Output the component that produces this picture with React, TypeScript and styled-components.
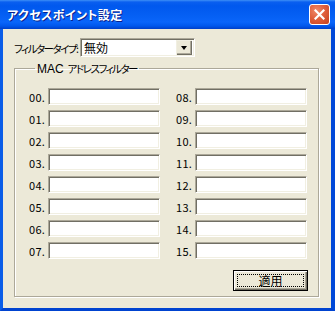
import React from 'react';
import styled, { createGlobalStyle } from 'styled-components';

const GlobalStyle = createGlobalStyle`
  html, body {
    margin: 0;
    padding: 0;
    background: #ffffff;
  }
  body {
    font-family: "Noto Sans CJK JP", "Liberation Sans", sans-serif;
    font-size: 12px;
    color: #000000;
  }
`;

const Window = styled.div`
  width: 335px;
  height: 311px;
  display: flex;
  flex-direction: column;
  background: #0055e5;
`;

const TitleBar = styled.div`
  height: 29px;
  flex: none;
  display: flex;
  align-items: center;
  justify-content: space-between;
  box-sizing: border-box;
  padding: 0 5px 0 7px;
  background: linear-gradient(
    to bottom,
    #3d8ff6 0px,
    #0a5ff0 2px,
    #0058ee 6px,
    #0560f4 16px,
    #0a65fa 22px,
    #0057ec 26px,
    #003fc8 29px
  );
`;

const Title = styled.span`
  color: #ffffff;
  font-weight: bold;
  font-size: 12px;
  font-feature-settings: 'palt';
  letter-spacing: 0.4px;
  text-shadow: 1px 1px 0 #0a1f8a;
`;

const CloseButton = styled.div`
  width: 21px;
  height: 21px;
  box-sizing: border-box;
  border: 1px solid #ffffff;
  border-radius: 3px;
  background: radial-gradient(circle at 35% 30%, #ef8a6a 0%, #e0603d 45%, #c4401d 100%);
  display: flex;
  align-items: center;
  justify-content: center;
`;

const Frame = styled.div`
  flex: 1;
  display: flex;
  border-left: 3px solid #0a5de8;
  border-right: 4px solid #0048d8;
  border-bottom: 3px solid #0043d0;
`;

const Client = styled.div`
  flex: 1;
  background: #ece9d8;
  display: flex;
  flex-direction: column;
  padding: 9px 0 0 11px;
`;

const FilterRow = styled.div`
  display: flex;
  align-items: center;
`;

// narrow katakana run, to get close to the proportional UI font widths
const Kana = styled.span`
  font-size: 10.5px;
  font-feature-settings: 'palt';
  letter-spacing: -1.5px;
`;

const FilterLabel = styled.span`
  width: 66px;
  flex: none;
  white-space: nowrap;
`;

const Combo = styled.div`
  width: 115px;
  height: 19px;
  box-sizing: border-box;
  background: #ffffff;
  border-top: 1px solid #aca899;
  border-left: 1px solid #aca899;
  border-bottom: 1px solid #ffffff;
  border-right: 1px solid #ffffff;
  box-shadow: inset 1px 1px 0 #716f64, inset -1px -1px 0 #f1efe2;
  display: flex;
  align-items: center;
  padding: 2px;
`;

const ComboValue = styled.span`
  flex: 1;
  padding-left: 1px;
  line-height: 15px;
`;

const ComboButton = styled.span`
  width: 16px;
  height: 15px;
  box-sizing: border-box;
  background: #ece9d8;
  box-shadow: inset 1px 1px 0 #f1efe2, inset -1px -1px 0 #716f64, inset -2px -2px 0 #aca899;
  display: flex;
  align-items: center;
  justify-content: center;
`;

const Arrow = styled.span`
  width: 0;
  height: 0;
  border-left: 3.5px solid transparent;
  border-right: 3.5px solid transparent;
  border-top: 4px solid #000000;
  margin-top: 1px;
`;

const Group = styled.fieldset`
  width: 305px;
  box-sizing: border-box;
  margin: 4px 0 0 0;
  padding: 12px 10px 5px 14px;
  border: 1px solid #aca899;
  box-shadow: 1px 1px 0 #ffffff, inset 1px 1px 0 #ffffff;
  display: flex;
  flex-direction: column;
`;

const Legend = styled.legend`
  margin-left: 6px;
  padding: 0 2px;
  line-height: 14px;
  white-space: nowrap;
`;

const Latin = styled.span`
  font-family: "Liberation Sans", sans-serif;
  font-size: 12px;
  margin-right: 4px;
`;

const Columns = styled.div`
  display: flex;
  gap: 16px;
`;

const Column = styled.div`
  display: flex;
  flex-direction: column;
  gap: 5px;
`;

const Row = styled.div`
  display: flex;
  align-items: center;
`;

const Num = styled.span`
  width: 19px;
  font-size: 11px;
  letter-spacing: 0.3px;
`;

const Field = styled.input`
  width: 112px;
  height: 17px;
  box-sizing: border-box;
  margin: 0;
  padding: 0 2px;
  background: #ffffff;
  border-top: 1px solid #aca899;
  border-left: 1px solid #aca899;
  border-bottom: 1px solid #ffffff;
  border-right: 1px solid #ffffff;
  box-shadow: inset 1px 1px 0 #716f64, inset -1px -1px 0 #f1efe2;
  outline: none;
  font: inherit;
`;

const Footer = styled.div`
  display: flex;
  justify-content: flex-end;
  margin-top: 11px;
`;

const Button = styled.button`
  width: 75px;
  height: 21px;
  box-sizing: border-box;
  margin: 0;
  padding: 3px;
  border: 1px solid #000000;
  background: #ece9d8;
  box-shadow: inset 1px 1px 0 #ffffff, inset -1px -1px 0 #716f64, inset -2px -2px 0 #aca899;
  font: inherit;
  display: flex;
`;

const FocusRect = styled.span`
  flex: 1;
  border: 1px dotted #000000;
  display: flex;
  align-items: center;
  justify-content: center;
  line-height: 11px;
`;

const leftRows = ['00', '01', '02', '03', '04', '05', '06', '07'];
const rightRows = ['08', '09', '10', '11', '12', '13', '14', '15'];

const App: React.FC = () => {
  return (
    <>
      <GlobalStyle />
      <Window>
        <TitleBar>
          <Title>アクセスポイント設定</Title>
          <CloseButton>
            <svg width="11" height="11" viewBox="0 0 11 11">
              <path d="M1.5 1.5 L9.5 9.5 M9.5 1.5 L1.5 9.5" stroke="#ffffff" strokeWidth="2.2" strokeLinecap="square" />
            </svg>
          </CloseButton>
        </TitleBar>
        <Frame>
          <Client>
            <FilterRow>
              <FilterLabel>
                <Kana>フィルタータイプ:</Kana>
              </FilterLabel>
              <Combo>
                <ComboValue>無効</ComboValue>
                <ComboButton>
                  <Arrow />
                </ComboButton>
              </Combo>
            </FilterRow>
            <Group>
              <Legend>
                <Latin>MAC</Latin>
                <Kana>アドレスフィルター</Kana>
              </Legend>
              <Columns>
                {[leftRows, rightRows].map((col, i) => (
                  <Column key={i}>
                    {col.map((n) => (
                      <Row key={n}>
                        <Num>{n}.</Num>
                        <Field type="text" />
                      </Row>
                    ))}
                  </Column>
                ))}
              </Columns>
              <Footer>
                <Button>
                  <FocusRect>適用</FocusRect>
                </Button>
              </Footer>
            </Group>
          </Client>
        </Frame>
      </Window>
    </>
  );
};

export default App;
